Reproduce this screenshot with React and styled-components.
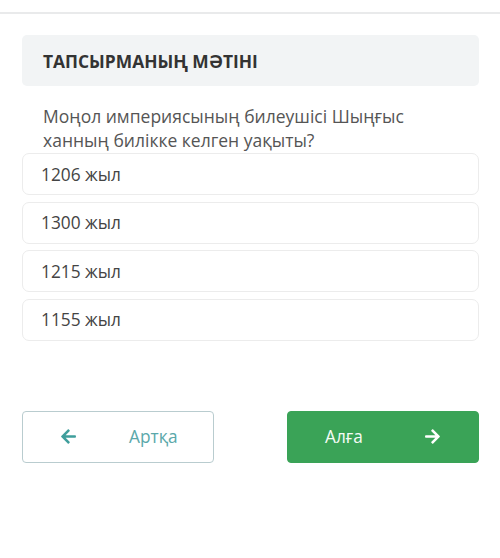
import React from "react";
import styled, { createGlobalStyle } from "styled-components";
import { FaArrowLeft, FaArrowRight } from "react-icons/fa";

const Global = createGlobalStyle`
  html, body { margin: 0; padding: 0; background: #fff; }
  body { font-family: "Open Sans", "Noto Sans", sans-serif; }
  * { box-sizing: border-box; }
`;

const Page = styled.div`
  width: 500px;
  height: 558px;
  padding-top: 12px;
  background: #fff;
`;

const TopLine = styled.div`
  height: 2px;
  background: #e9eaeb;
`;

const Content = styled.div`
  padding: 21px 21px 0 22px;
  display: flex;
  flex-direction: column;
`;

const Header = styled.div`
  height: 51px;
  background: #f2f4f5;
  border-radius: 5px;
  display: flex;
  align-items: center;
  padding-left: 21px;
  font-size: 17.4px;
  font-weight: 700;
  color: #333;
`;

const Question = styled.div`
  margin-top: 18px;
  padding-left: 21px;
  padding-right: 50px;
  font-size: 17.5px;
  line-height: 24px;
  color: #555;
`;

const Options = styled.div`
  margin-top: 1px;
  display: flex;
  flex-direction: column;
  gap: 6.5px;
`;

const Option = styled.div`
  height: 42px;
  border: 1px solid #ececec;
  border-radius: 7px;
  display: flex;
  align-items: center;
  padding-left: 18px;
  font-size: 17.3px;
  color: #444;
  background: #fff;
`;

const Buttons = styled.div`
  margin-top: 70px;
  display: flex;
  justify-content: space-between;
`;

const NavButton = styled.div`
  width: 192px;
  height: 52px;
  border-radius: 4px;
  display: flex;
  align-items: center;
  font-size: 17.3px;
  border: 1px solid ${p => (p.$primary ? "#3aa357" : "#b9cccf")};
  background: ${p => (p.$primary ? "#3aa357" : "#fff")};
  color: ${p => (p.$primary ? "#f4fbf6" : "#5aa8aa")};
`;

const Icon = styled.span`
  display: flex;
  align-items: center;
  font-size: 17px;
  color: ${p => p.$color};
`;

export default function App() {
  return (
    <Page>
      <Global />
      <TopLine />
      <Content>
        <Header>ТАПСЫРМАНЫҢ МӘТІНІ</Header>
        <Question>Моңол империясының билеушісі Шыңғыс ханның билікке келген уақыты?</Question>
        <Options>
          <Option>1206 жыл</Option>
          <Option>1300 жыл</Option>
          <Option>1215 жыл</Option>
          <Option>1155 жыл</Option>
        </Options>
        <Buttons>
          <NavButton>
            <Icon $color="#3f9e9c" style={{ marginLeft: 37 }}><FaArrowLeft /></Icon>
            <span style={{ marginLeft: 52 }}>Артқа</span>
          </NavButton>
          <NavButton $primary>
            <span style={{ marginLeft: 37 }}>Алға</span>
            <Icon $color="#fff" style={{ marginLeft: 61 }}><FaArrowRight /></Icon>
          </NavButton>
        </Buttons>
      </Content>
    </Page>
  );
}
